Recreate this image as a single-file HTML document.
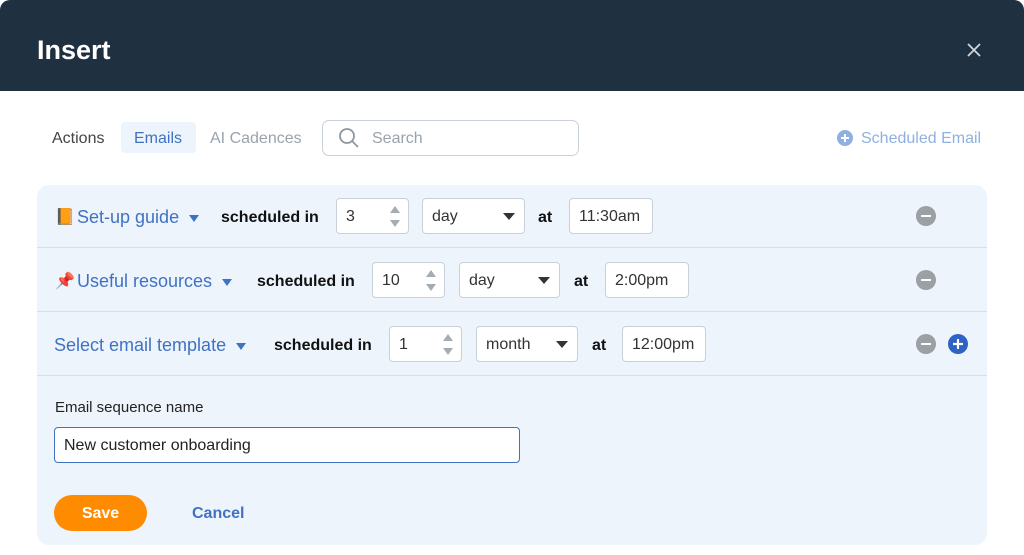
<!DOCTYPE html>
<html><head><style>
*{box-sizing:border-box;margin:0;padding:0}
body{width:1024px;height:555px;background:#fff;font-family:"Liberation Sans","DejaVu Sans",sans-serif;position:relative;overflow:hidden;color:#1d2733}
.a{position:absolute}
.hdr{left:0;top:0;width:1024px;height:91px;background:#1f3040;border-radius:10px 10px 0 0}
.box{background:#fff;border:1px solid #c9d0d8;border-radius:4px;height:36px;font-size:16px;line-height:36px;padding-left:9px;color:#333}
.lnk{color:#3f72c3;font-size:18px}
.b{font-weight:bold;font-size:16px;color:#111}
.tri{display:inline-block;width:0;height:0;border-left:5px solid transparent;border-right:5px solid transparent;border-top:7px solid #3f72c3;vertical-align:middle;margin-left:10px}
.sp{position:absolute;right:8px;top:7px;width:0;height:0;border-left:5px solid transparent;border-right:5px solid transparent;border-bottom:7px solid #a5acb4}
.sp2{position:absolute;right:8px;top:21px;width:0;height:0;border-left:5px solid transparent;border-right:5px solid transparent;border-top:7px solid #a5acb4}
.dd{position:absolute;right:9px;top:14px;width:0;height:0;border-left:6px solid transparent;border-right:6px solid transparent;border-top:7px solid #333}
.min{width:20px;height:20px;border-radius:50%;background:#9aa0a6}
.min:after{content:"";position:absolute;left:5px;top:9px;width:10px;height:2px;background:#fff}
.line{left:37px;width:950px;height:1px;background:#d8dee6}
</style></head><body>
<div class="a hdr"></div>
<div class="a" style="left:37px;top:35px;font-size:27px;font-weight:bold;color:#fff">Insert</div>
<svg class="a" style="left:966px;top:42px" width="16" height="16"><path d="M2 2l12 12M14 2L2 14" stroke="#cfd6dd" stroke-width="1.8"/></svg>
<div class="a" style="left:52px;top:130px;font-size:16px;color:#444">Actions</div>
<div class="a" style="left:121px;top:122px;width:75px;height:31px;background:#eef4fc;border-radius:4px"></div>
<div class="a" style="left:134px;top:130px;font-size:16px;color:#3f72c3">Emails</div>
<div class="a" style="left:210px;top:130px;font-size:16px;color:#9aa3ad">AI Cadences</div>
<div class="a" style="left:322px;top:120px;width:257px;height:36px;border:1px solid #c9d0d8;border-radius:7px"></div>
<svg class="a" style="left:337px;top:126px" width="24" height="24" viewBox="0 0 24 24"><circle cx="10" cy="10" r="7" fill="none" stroke="#8e969e" stroke-width="1.8"/><path d="M15 15l6 6" stroke="#8e969e" stroke-width="1.8"/></svg>
<div class="a" style="left:372px;top:130px;font-size:16px;color:#9aa3ad">Search</div>
<svg class="a" style="left:837px;top:130px" width="16" height="16"><circle cx="8" cy="8" r="8" fill="#8fb0e0"/><path d="M4 8h8M8 4v8" stroke="#fff" stroke-width="2"/></svg>
<div class="a" style="left:861px;top:130px;font-size:16px;color:#8fb0e0">Scheduled Email</div>

<div class="a" style="left:37px;top:185px;width:950px;height:360px;background:#eef4fc;border-radius:12px"></div>
<div class="a line" style="top:247px"></div>
<div class="a line" style="top:311px"></div>
<div class="a line" style="top:375px"></div>

<div class="a" style="left:55px;top:207px;font-size:16px">📙</div>
<div class="a lnk" style="left:77px;top:207px">Set-up guide<span class="tri"></span></div>
<div class="a b" style="left:221px;top:209px">scheduled in</div>
<div class="a box" style="left:336px;top:198px;width:73px">3<span class="sp"></span><span class="sp2"></span></div>
<div class="a box" style="left:422px;top:198px;width:103px">day<span class="dd"></span></div>
<div class="a b" style="left:538px;top:209px">at</div>
<div class="a box" style="left:569px;top:198px;width:84px">11:30am</div>
<div class="a min" style="left:916px;top:206px"></div>

<div class="a" style="left:55px;top:271px;font-size:16px">📌</div>
<div class="a lnk" style="left:77px;top:271px">Useful resources<span class="tri"></span></div>
<div class="a b" style="left:257px;top:273px">scheduled in</div>
<div class="a box" style="left:372px;top:262px;width:73px">10<span class="sp"></span><span class="sp2"></span></div>
<div class="a box" style="left:459px;top:262px;width:101px">day<span class="dd"></span></div>
<div class="a b" style="left:574px;top:273px">at</div>
<div class="a box" style="left:605px;top:262px;width:84px">2:00pm</div>
<div class="a min" style="left:916px;top:270px"></div>

<div class="a lnk" style="left:54px;top:335px">Select email template<span class="tri"></span></div>
<div class="a b" style="left:274px;top:337px">scheduled in</div>
<div class="a box" style="left:389px;top:326px;width:73px">1<span class="sp"></span><span class="sp2"></span></div>
<div class="a box" style="left:476px;top:326px;width:102px">month<span class="dd"></span></div>
<div class="a b" style="left:592px;top:337px">at</div>
<div class="a box" style="left:622px;top:326px;width:84px">12:00pm</div>
<div class="a min" style="left:916px;top:334px"></div>
<svg class="a" style="left:948px;top:334px" width="20" height="20"><circle cx="10" cy="10" r="10" fill="#2e62c4"/><path d="M5 10h10M10 5v10" stroke="#fff" stroke-width="2.2"/></svg>

<div class="a" style="left:55px;top:399px;font-size:15px;color:#222">Email sequence name</div>
<div class="a" style="left:54px;top:427px;width:466px;height:36px;background:#fff;border:1.5px solid #3f72c3;border-radius:4px;font-size:16px;line-height:35px;padding-left:9px;color:#222">New customer onboarding</div>
<div class="a" style="left:54px;top:495px;width:93px;height:36px;background:#ff8c00;border-radius:18px;color:#fff;font-weight:bold;font-size:16px;text-align:center;line-height:37px">Save</div>
<div class="a" style="left:192px;top:505px;font-size:16px;font-weight:bold;color:#3f72c3">Cancel</div>
</body></html>
